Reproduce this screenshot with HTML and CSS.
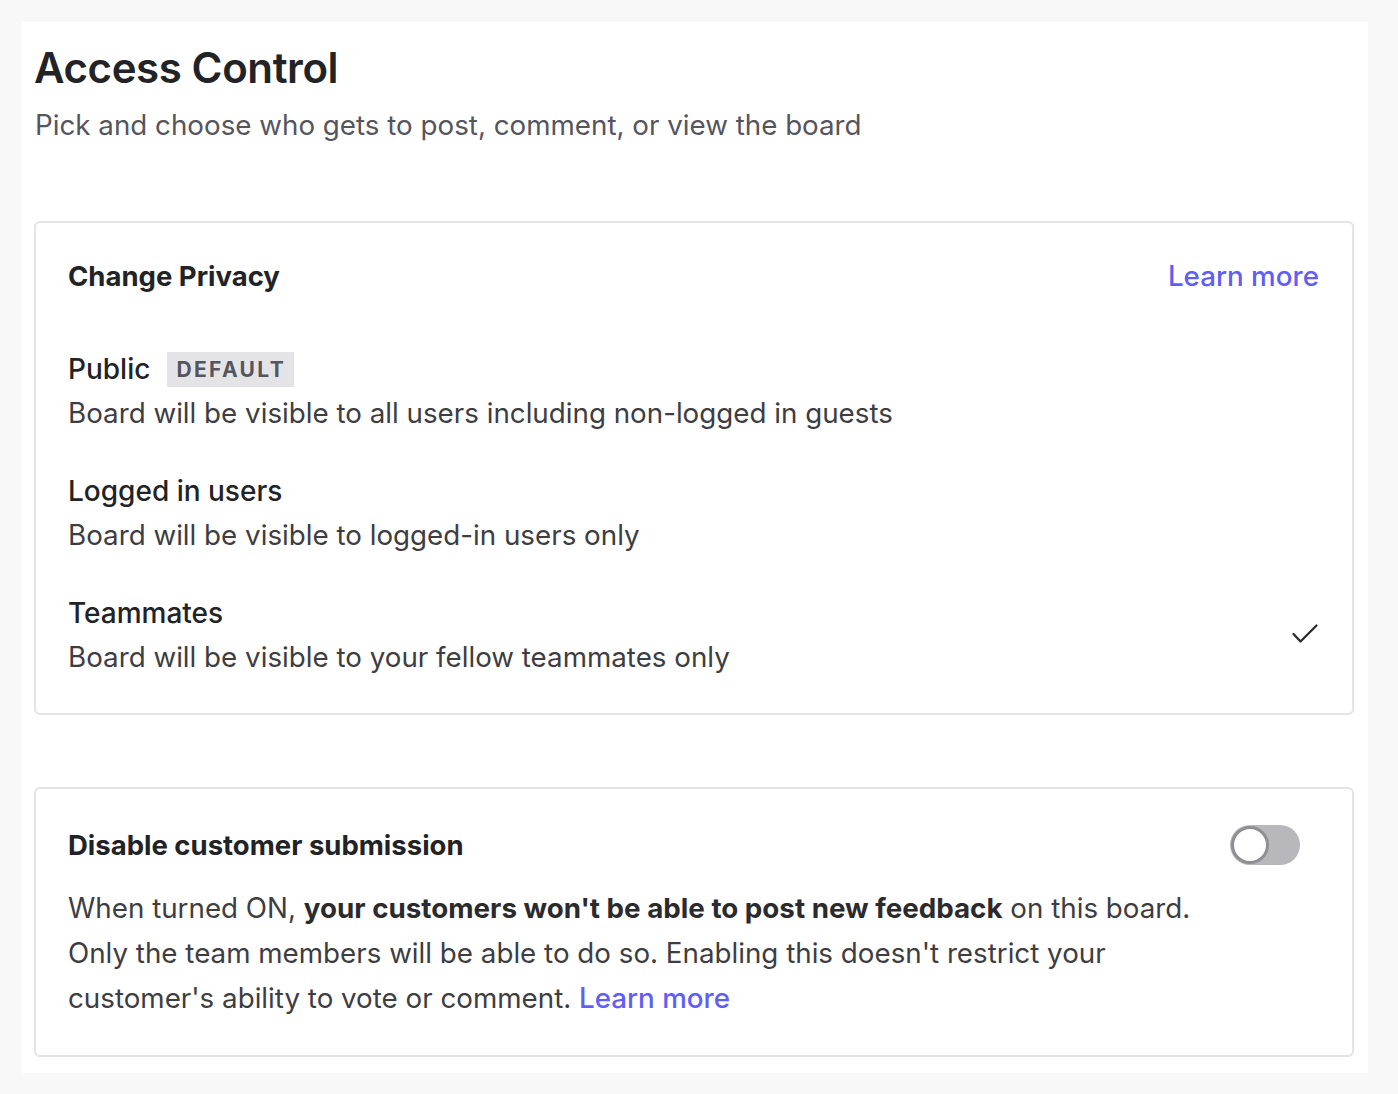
FILE: index.html
```html
<!DOCTYPE html>
<html lang="en">
<head>
<meta charset="utf-8">
<title>Access Control</title>
<link rel="stylesheet" href="styles.css">
</head>
<body>
<div class="panel">
  <h1 class="title">Access Control</h1>
  <p class="subtitle">Pick and choose who gets to post, comment, or view the board</p>

  <section class="card privacy">
    <div class="card-head">
      <h2 class="card-title">Change Privacy</h2>
      <a class="link" href="#">Learn more</a>
    </div>
    <div class="option first">
      <div class="option-text">
        <div class="option-name">Public <span class="badge">DEFAULT</span></div>
        <div class="option-desc">Board will be visible to all users including non-logged in guests</div>
      </div>
    </div>
    <div class="option">
      <div class="option-text">
        <div class="option-name">Logged in users</div>
        <div class="option-desc">Board will be visible to logged-in users only</div>
      </div>
    </div>
    <div class="option">
      <div class="option-text">
        <div class="option-name">Teammates</div>
        <div class="option-desc">Board will be visible to your fellow teammates only</div>
      </div>
      <svg class="check" width="28" height="22" viewBox="0 0 28 22" aria-hidden="true">
        <path d="M2.5 11 L9.5 18.5 L25.5 2.5" fill="none" stroke="#2b2b2e" stroke-width="2.3" stroke-linecap="round" stroke-linejoin="round"/>
      </svg>
    </div>
  </section>

  <section class="card submission">
    <div class="card-head">
      <h2 class="card-title">Disable customer submission</h2>
      <span class="toggle"><span class="knob"></span></span>
    </div>
    <p class="para">When turned ON, <strong>your customers won't be able to post new feedback</strong> on this board. Only the team members will be able to do so. Enabling this doesn't restrict your customer's ability to vote or comment. <a class="link" href="#">Learn more</a></p>
  </section>
</div>
</body>
</html>
```

FILE: styles.css
```css
* { box-sizing: border-box; }
html, body { margin: 0; padding: 0; }
body {
  background: #f8f8f8;
  font-family: "Inter", "Liberation Sans", sans-serif;
  color: #3d3d42;
  padding: 22px 30px 22px 22px;
}
.panel {
  background: #ffffff;
  padding: 22px 14px 16px 12px;
}
.title {
  margin: 0;
  font-size: 42px;
  line-height: 48px;
  font-weight: 600;
  color: #222326;
  letter-spacing: -0.4px;
}
.subtitle {
  margin: 13px 0 0 1px;
  font-size: 27.75px;
  line-height: 40px;
  color: #55555d;
}
.card {
  border: 2px solid #e4e4e4;
  border-radius: 6px;
  padding: 0 33px 0 32px;
}
.privacy {
  margin-top: 76px;
  padding-top: 33px;
  padding-bottom: 36px;
}
.submission {
  margin-top: 72px;
  padding-top: 36px;
  padding-bottom: 34px;
  padding-right: 52px;
}
.card-head {
  display: flex;
  justify-content: space-between;
  align-items: center;
  height: 40px;
}
.card-title {
  margin: 0;
  font-size: 27.5px;
  line-height: 40px;
  font-weight: 700;
  color: #222326;
}
.link {
  color: #615ef5;
  text-decoration: none;
  font-weight: 500;
  font-size: 27.75px;
}
.option {
  display: flex;
  align-items: center;
  justify-content: space-between;
  margin-top: 38px;
}
.option.first { margin-top: 53px; }
.option-name {
  font-size: 28px;
  line-height: 40px;
  font-weight: 500;
  color: #222326;
  display: flex;
  align-items: center;
}
.badge {
  display: inline-block;
  margin-left: 17px;
  background: #e4e4e7;
  color: #55555f;
  font-size: 21px;
  font-weight: 700;
  letter-spacing: 2.4px;
  line-height: 35px;
  padding: 0 8px 0 9px;
}
.option-desc {
  margin-top: 4px;
  font-size: 27.75px;
  line-height: 40px;
  color: #3d3d42;
}
.check { display: block; margin-top: -2px; }
.toggle {
  display: inline-block;
  width: 70px;
  height: 40px;
  border-radius: 20px;
  background: #b7b7bc;
  position: relative;
}
.knob {
  position: absolute;
  left: 1px;
  top: 1px;
  width: 38px;
  height: 38px;
  border-radius: 50%;
  background: #ffffff;
  border: 3px solid #8e8e93;
}
.para {
  margin: 21px 0 0 0;
  max-width: 1150px;
  font-size: 27.75px;
  line-height: 45px;
  color: #3d3d42;
}
.para strong { font-weight: 650; color: #2b2b2e; }
```
